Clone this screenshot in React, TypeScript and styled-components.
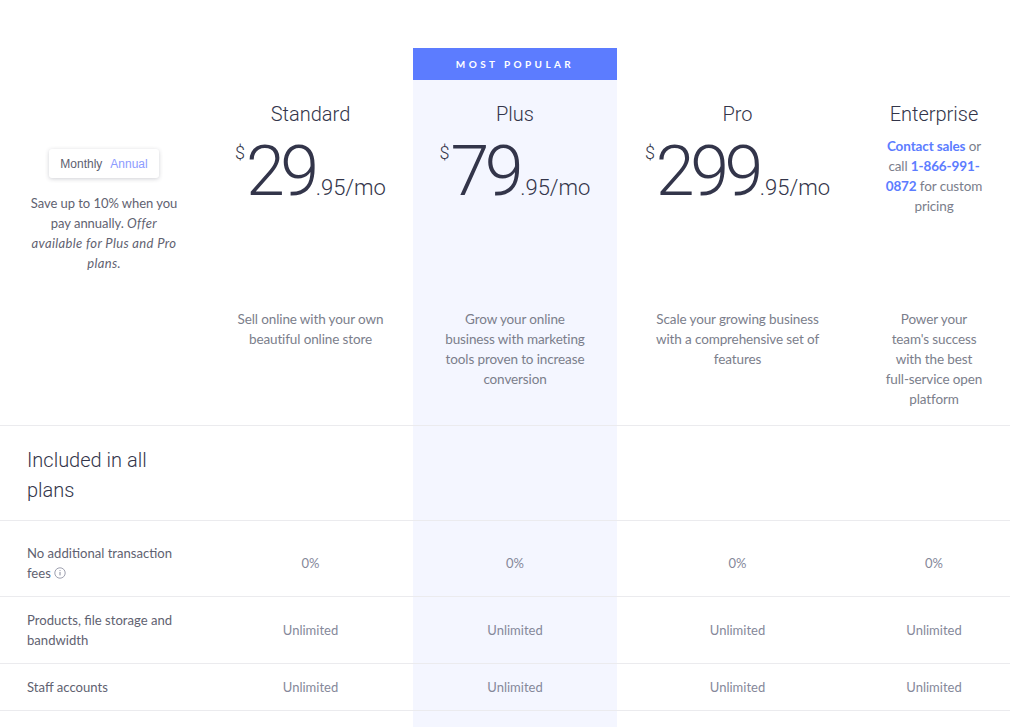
import React from "react";
import styled, { createGlobalStyle } from "styled-components";

const Global = createGlobalStyle`
  html, body { margin: 0; padding: 0; background: #fff; overflow: hidden; }
  body { font-family: "Lato", "Open Sans", sans-serif; color: #6b6f7d; }
`;

const columns = "208px 205px 204px 241px 152px";

const Page = styled.div`
  width: 1024px;
  height: 727px;
  overflow: hidden;
`;

const Table = styled.div`
  position: relative;
  width: 1010px;
  padding-top: 48px;
`;

const Highlight = styled.div`
  position: absolute;
  top: 48px;
  bottom: 0;
  left: 413px;
  width: 204px;
  background: #f4f6ff;
`;

const Row = styled.div<{ $h: number; $line?: boolean }>`
  position: relative;
  display: grid;
  grid-template-columns: ${columns};
  height: ${(p) => p.$h}px;
  box-sizing: border-box;
  border-bottom: ${(p) => (p.$line ? "1px solid #ebebee" : "none")};
`;

const Badge = styled.div`
  grid-column: 3;
  background: #5c7cff;
  color: #fff;
  font-size: 10px;
  font-weight: 700;
  letter-spacing: 3.4px;
  height: 32px;
  display: flex;
  align-items: center;
  justify-content: center;
`;

const Toggle = styled.div`
  display: flex;
  gap: 8px;
  align-items: center;
  justify-content: center;
  width: 110px;
  height: 29px;
  flex: none;
  border-radius: 3px;
  background: #fff;
  box-shadow: 0 1px 4px rgba(40, 44, 70, 0.22);
  font-family: "Liberation Sans", sans-serif;
  font-size: 12px;
  color: #5d6070;
`;

const Annual = styled.span`
  color: #8c9bff;
`;

const Side = styled.div`
  display: flex;
  flex-direction: column;
  align-items: center;
  padding: 69px 30px 0 30px;
`;

const SideText = styled.p`
  margin: 15px 0 0;
  text-align: center;
  font-size: 13px;
  letter-spacing: -0.04px;
  line-height: 20px;
  color: #5f6271;
`;

const Offer = styled.em`
  letter-spacing: 0.35px;
`;

const PlanCell = styled.div`
  position: relative;
  display: flex;
  flex-direction: column;
  align-items: center;
  padding-top: 20px;
`;

const PlanName = styled.div`
  font-family: "Roboto", sans-serif;
  font-weight: 300;
  font-size: 20px;
  line-height: 28px;
  color: #33354a;
`;

const Price = styled.div`
  display: flex;
  align-items: baseline;
  color: #33354a;
  margin-top: 12px;
  height: 62px;
  font-family: "Roboto", sans-serif;
`;

const Currency = styled.span`
  font-size: 18px;
  font-weight: 300;
  align-self: flex-start;
  line-height: 26px;
  margin-right: 1px;
`;

const Amount = styled.span`
  font-size: 70px;
  line-height: 62px;
  font-weight: 300;
  letter-spacing: -4.5px;
`;

const Cents = styled.span`
  font-size: 22px;
  font-weight: 300;
  margin-left: 1px;
`;

const Contact = styled.p`
  margin: 8px 0 0;
  padding: 0 18px;
  text-align: center;
  font-size: 13.5px;
  letter-spacing: -0.12px;
  line-height: 20px;
  color: #7b7e8b;
`;

const Strong = styled.strong`
  color: #5c7cff;
  font-weight: 700;
`;

const Desc = styled.p<{ $pad: number }>`
  position: relative;
  margin: 0;
  padding: 11px ${(p) => p.$pad}px 0;
  text-align: center;
  font-size: 13.5px;
  letter-spacing: -0.12px;
  line-height: 20px;
  color: #7b7e8b;
`;

const SectionTitle = styled.div`
  grid-column: 1;
  padding: 19px 50px 0 27px;
  font-family: "Roboto", sans-serif;
  font-weight: 300;
  font-size: 20px;
  line-height: 30px;
  color: #33354a;
`;

const Label = styled.div<{ $top: number }>`
  display: flex;
  align-items: center;
  padding: ${(p) => p.$top}px 30px 0 27px;
  font-size: 13.1px;
  line-height: 20px;
  color: #5f6271;
`;

const Value = styled.div<{ $top: number }>`
  position: relative;
  display: flex;
  align-items: center;
  justify-content: center;
  padding-top: ${(p) => p.$top}px;
  font-size: 13px;
  color: #85889a;
`;

const InfoIcon = () => (
  <svg width="12" height="12" viewBox="0 0 12 12" fill="none" style={{ verticalAlign: "-1px" }}>
    <circle cx="6" cy="6" r="5.2" stroke="#85889a" strokeWidth="0.8" />
    <path d="M6 5v3.4M6 3.2v.9" stroke="#85889a" strokeWidth="1" />
  </svg>
);

const plans = [
  { name: "Standard", amount: "29", desc: "Sell online with your own beautiful online store" },
  { name: "Plus", amount: "79", desc: "Grow your online business with marketing tools proven to increase conversion" },
  { name: "Pro", amount: "299", desc: "Scale your growing business with a comprehensive set of features" },
];

const rows: { label: React.ReactNode; value: string; h: number; top: number }[] = [
  { label: <span>No additional transaction fees <InfoIcon /></span>, value: "0%", h: 76, top: 9 },
  { label: "Products, file storage and bandwidth", value: "Unlimited", h: 67, top: 0 },
  { label: "Staff accounts", value: "Unlimited", h: 47, top: 0 },
];

export default function App() {
  return (
    <Page>
      <Global />
      <Table>
        <Highlight />
        <Row $h={32}>
          <Badge>MOST POPULAR</Badge>
        </Row>
        <Row $h={218}>
          <Side>
            <Toggle>
              <span>Monthly</span>
              <Annual>Annual</Annual>
            </Toggle>
            <SideText>
              Save up to 10% when you pay annually. <Offer>Offer available for Plus and Pro plans.</Offer>
            </SideText>
          </Side>
          {plans.map((p) => (
            <PlanCell key={p.name}>
              <PlanName>{p.name}</PlanName>
              <Price>
                <Currency>$</Currency>
                <Amount>{p.amount}</Amount>
                <Cents>.95/mo</Cents>
              </Price>
            </PlanCell>
          ))}
          <PlanCell>
            <PlanName>Enterprise</PlanName>
            <Contact>
              <Strong>Contact sales</Strong> or call <Strong>1-866-991-0872</Strong> for custom pricing
            </Contact>
          </PlanCell>
        </Row>
        <Row $h={128} $line>
          <div />
          {plans.map((p) => (
            <Desc key={p.name} $pad={28}>{p.desc}</Desc>
          ))}
          <Desc $pad={25}>Power your team's success with the best full-service open platform</Desc>
        </Row>
        <Row $h={95} $line>
          <SectionTitle>Included in all plans</SectionTitle>
        </Row>
        {rows.map((r, i) => (
          <Row key={i} $h={r.h} $line>
            <Label $top={r.top}>
              <span>{r.label}</span>
            </Label>
            <Value $top={r.top}>{r.value}</Value>
            <Value $top={r.top}>{r.value}</Value>
            <Value $top={r.top}>{r.value}</Value>
            <Value $top={r.top}>{r.value}</Value>
          </Row>
        ))}
        <Row $h={40} />
      </Table>
    </Page>
  );
}
